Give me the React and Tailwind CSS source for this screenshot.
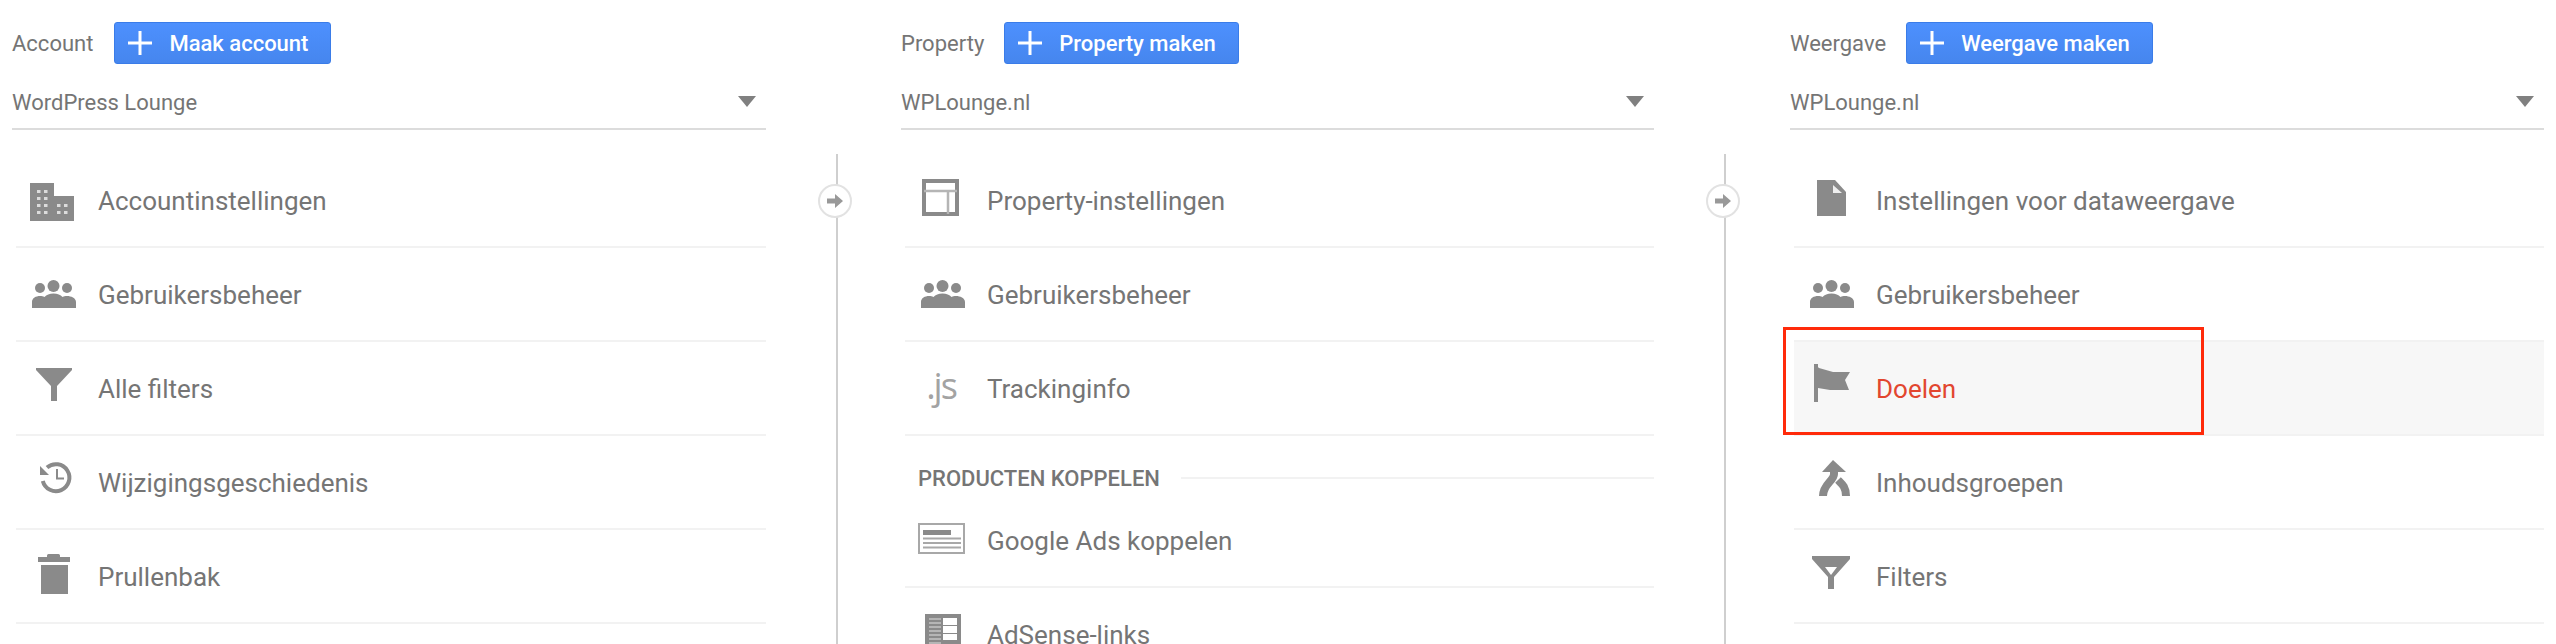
import React from 'react';

const gray = '#8a8a8a';

// every icon sits in a 56px box, coordinates were read off the screenshot
const Box = ({ children }) => (
  <svg viewBox="0 1 56 56" className="w-[56px] h-[56px] shrink-0 mr-[16px]">
    {children}
  </svg>
);

const BuildingIcon = () => (
  <Box>
    <path d="M4 12h24v13h20v25H4z" fill={gray} />
    {[19, 26, 33, 40].map((y) => (
      <g key={y} fill="#dcdcdc">
        <rect x="11" y={y} width="3.5" height="3" />
        <rect x="18" y={y} width="3.5" height="3" />
      </g>
    ))}
    {[33, 40].map((y) => (
      <g key={y} fill="#dcdcdc">
        <rect x="31" y={y} width="3.5" height="3" />
        <rect x="38" y={y} width="3.5" height="3" />
      </g>
    ))}
  </Box>
);

const PeopleIcon = () => (
  <Box>
    <circle cx="27.5" cy="21" r="6" fill={gray} />
    <circle cx="14" cy="23" r="5" fill={gray} />
    <circle cx="41" cy="23" r="5" fill={gray} />
    <path d="M6 43V37c0-4 4-6 8-6 2 0 3 .3 4.5 1 2-2 5-3.5 9-3.5s7 1.5 9 3.5c1.5-.7 2.5-1 4.5-1 4 0 9 2 9 6v6z" fill={gray} />
  </Box>
);

const FunnelIcon = () => (
  <Box>
    <path d="M10 9h36v2L31 27v15h-6V27L10 11z" fill={gray} />
  </Box>
);

const HistoryIcon = () => (
  <Box>
    <path d="M21 14.5A13.5 13.5 0 1 1 16.8 28" fill="none" stroke={gray} strokeWidth="4" />
    <path d="M14 13v9h9z" fill={gray} />
    <path d="M31 16v9.5h7" fill="none" stroke={gray} strokeWidth="2" />
  </Box>
);

const TrashIcon = () => (
  <Box>
    <path d="M21 10V8.5q0-1.500 1.500-1.500h10q1.500 0 1.500 1.500V10h10v5H12v-5z" fill={gray} />
    <rect x="15" y="18" width="27" height="29" fill={gray} />
  </Box>
);

const LayoutIcon = () => (
  <Box>
    <rect x="9" y="10" width="33" height="33" fill="none" stroke={gray} strokeWidth="4" />
    <path d="M9 20h33M33 20v23" fill="none" stroke="#b5b5b5" strokeWidth="2.500" />
  </Box>
);

const JsIcon = () => (
  <Box>
    <text x="26" y="40" textAnchor="middle" fontFamily="'Open Sans', sans-serif" fontSize="36" letterSpacing="-2" fill="#a3a3a3">.js</text>
  </Box>
);

const AdsIcon = () => (
  <Box>
    <rect x="4" y="13" width="45" height="29" fill="#fff" stroke="#a8a8a8" strokeWidth="2" />
    <rect x="8" y="19" width="28" height="5" fill={gray} />
    <path d="M8 27.500h38M8 32h38M8 36.500h38" stroke="#a8a8a8" strokeWidth="2" />
  </Box>
);

const AdsenseIcon = () => (
  <Box>
    <rect x="10" y="9" width="36" height="37" fill={gray} />
    <path d="M14 14h12M14 18h12M14 22h12M14 26h12M14 30h12M14 34h12M14 38h12" stroke="#b5b5b5" strokeWidth="2" />
    <rect x="28" y="13" width="14" height="7" fill="#fff" />
    <rect x="28" y="21" width="14" height="7" fill="#fff" />
    <rect x="28" y="29" width="14" height="6" fill="#fff" />
  </Box>
);

const DocIcon = () => (
  <Box>
    <path d="M13 9h18l11 12v24H13z" fill={gray} />
    <path d="M29 14v8h9z" fill="#eee" />
  </Box>
);

const FlagIcon = () => (
  <Box>
    <rect x="10" y="5" width="4" height="38" fill={gray} />
    <path d="M12 6l3 3 14 4h17l-5 8 4 10H26l-12-2z" fill={gray} />
  </Box>
);

const MergeIcon = () => (
  <Box>
    <path d="M29 7l13 12H18z" fill={gray} />
    <path d="M30 18v3c0 7-11 10-11 22" fill="none" stroke={gray} strokeWidth="8" />
    <path d="M34 27c4 4 8 7 8 16" fill="none" stroke={gray} strokeWidth="8" />
  </Box>
);

const FilterIcon = () => (
  <Box>
    <path fillRule="evenodd" d="M8 9h38v3L30 30v12h-6V30L8 12zM21 20h12l-6 8z" fill={gray} />
  </Box>
);

const Row = ({ icon, label, active, marked }) => (
  <div className={`relative flex items-center h-[94px] ml-[4px] pl-[10px] border-b-2 border-[#f2f2f2] ${active ? 'bg-[#f7f7f7]' : ''}`}>
    {icon}
    <span className={`text-[26px] pt-[3px] ${active ? 'text-[#e2462f]' : 'text-[#757575]'}`}>{label}</span>
    {marked && (
      <div className="absolute left-[-11px] top-[-15px] w-[421px] h-[108px] border-[3px] border-[#ff2a0a]" />
    )}
  </div>
);

const Column = ({ width, titleGap, title, button, selected, children }) => (
  <div className={`${width} shrink-0`}>
    <div className="flex items-center pt-[22px]">
      <span className={`text-[22px] text-[#757575] ${titleGap}`}>{title}</span>
      <button className="flex items-center h-[42px] pl-[13px] pr-[22px] rounded-[3px] border border-[#3a7ce8] bg-linear-to-b from-[#4d90fe] to-[#4686ee] text-white text-[22px] font-medium">
        <svg viewBox="0 0 24 24" className="w-[24px] h-[24px] mr-[17px]">
          <path d="M12 0v24M0 12h24" stroke="#fff" strokeWidth="3" />
        </svg>
        {button}
      </button>
    </div>
    <div className="flex items-center justify-between h-[66px] pr-[10px] border-b-2 border-[#dcdcdc]">
      <span className="text-[22px] text-[#757575] pt-[12px]">{selected}</span>
      <svg viewBox="0 0 18 11" className="w-[18px] h-[11px] mt-[10px]">
        <path d="M0 0h18L9 11z" fill="#808080" />
      </svg>
    </div>
    <div className="pt-[24px]">{children}</div>
  </div>
);

// vertical line between two columns, with the little arrow badge on it
const Connector = ({ width }) => (
  <div className={`${width} shrink-0 pl-[52px] pt-[154px]`}>
    <div className="relative w-[34px] h-[490px]">
      <div className="ml-[18px] w-[2px] h-full bg-[#cfcfcf]" />
      <div className="absolute left-0 top-[30px] w-[34px] h-[34px] rounded-full bg-white border-2 border-[#e2e2e2] flex items-center justify-center">
        <svg viewBox="0 0 16 14" className="w-[16px] h-[14px]">
          <path d="M0 4.500h8V0l8 7-8 7V9.500H0z" fill="#999" />
        </svg>
      </div>
    </div>
  </div>
);

const App = () => {
  return (
    <div className="flex w-[2556px] h-[644px] overflow-hidden bg-white pl-[12px] font-['Roboto',sans-serif]">
      <Column width="w-[754px]" titleGap="mr-[21px]" title="Account" button="Maak account" selected="WordPress Lounge">
        <Row icon={<BuildingIcon />} label="Accountinstellingen" />
        <Row icon={<PeopleIcon />} label="Gebruikersbeheer" />
        <Row icon={<FunnelIcon />} label="Alle filters" />
        <Row icon={<HistoryIcon />} label="Wijzigingsgeschiedenis" />
        <Row icon={<TrashIcon />} label="Prullenbak" />
      </Column>

      <Connector width="w-[135px]" />

      <Column width="w-[753px]" titleGap="mr-[20px]" title="Property" button="Property maken" selected="WPLounge.nl">
        <Row icon={<LayoutIcon />} label="Property-instellingen" />
        <Row icon={<PeopleIcon />} label="Gebruikersbeheer" />
        <Row icon={<JsIcon />} label="Trackinginfo" />
        <div className="flex items-center h-[58px] pt-[26px] pl-[17px]">
          <span className="text-[22px] font-medium text-[#757575] mr-[21px] whitespace-nowrap">PRODUCTEN KOPPELEN</span>
          <div className="flex-1 h-[2px] bg-[#f2f2f2]" />
        </div>
        <Row icon={<AdsIcon />} label="Google Ads koppelen" />
        <Row icon={<AdsenseIcon />} label="AdSense-links" />
      </Column>

      <Connector width="w-[136px]" />

      <Column width="w-[754px]" titleGap="mr-[20px]" title="Weergave" button="Weergave maken" selected="WPLounge.nl">
        <Row icon={<DocIcon />} label="Instellingen voor dataweergave" />
        <Row icon={<PeopleIcon />} label="Gebruikersbeheer" />
        <Row icon={<FlagIcon />} label="Doelen" active marked />
        <Row icon={<MergeIcon />} label="Inhoudsgroepen" />
        <Row icon={<FilterIcon />} label="Filters" />
      </Column>
    </div>
  );
};

export default App;
